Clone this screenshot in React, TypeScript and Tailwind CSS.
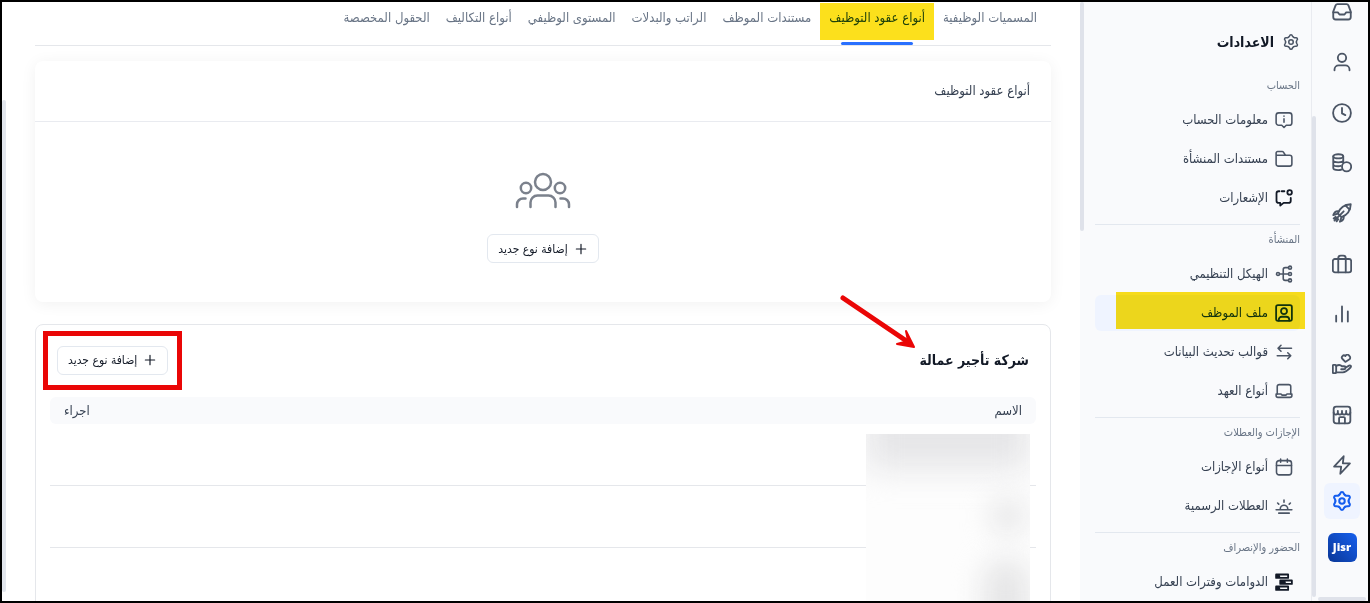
import type { ReactNode } from "react";
import clsx from "clsx";

function Icon({ children, className, stroke = 2 }: { children: ReactNode; className?: string; stroke?: number }) {
  return (
    <svg
      viewBox="0 0 24 24"
      fill="none"
      stroke="currentColor"
      strokeWidth={stroke}
      strokeLinecap="round"
      strokeLinejoin="round"
      className={clsx("shrink-0", className)}
      aria-hidden="true"
    >
      {children}
    </svg>
  );
}

const gear = (
  <>
    {[0, 60, 120, 180, 240, 300].map((a) => (
      <path
        key={a}
        transform={`rotate(${a} 12 12)`}
        d="M8.4 5.76C9 5.4 9.6 5 10 4.1C10.7 1.7 13.3 1.7 14 4.1C14.4 5 15 5.4 15.6 5.76"
      />
    ))}
    <circle cx="12" cy="12" r="3" />
  </>
);

const RAIL = [
  {
    label: "الطلبات",
    icon: (
      <>
        <path d="M1.500 12.500h5.500l2 2.500h6l2-2.500h5.500" />
        <path d="M6.500 2.500h11a2.500 2.500 0 0 1 2.200 1.500l2.800 7.500V18a3 3 0 0 1-3 3h-15a3 3 0 0 1-3-3v-6.500L4.300 4a2.500 2.500 0 0 1 2.200-1.500z" />
      </>
    ),
  },
  {
    label: "الموظفون",
    icon: (
      <>
        <circle cx="12" cy="7" r="5" />
        <path d="M3 22v-1a5 5 0 0 1 5-5h8a5 5 0 0 1 5 5v1" />
      </>
    ),
  },
  {
    label: "الحضور",
    icon: (
      <>
        <circle cx="12" cy="12" r="10.700" />
        <path d="M12 6v6.500l4 2" />
      </>
    ),
  },
  {
    label: "الرواتب",
    icon: (
      <>
        <ellipse cx="7.500" cy="4" rx="6" ry="2.500" />
        <path d="M1.500 4v14c0 1.400 2.700 2.500 6 2.500 1.500 0 2.800-.2 3.800-.6M13.500 4v7M1.500 8.700c0 1.400 2.700 2.500 6 2.500s6-1.100 6-2.500M1.500 13.400c0 1.400 2.700 2.500 6 2.500 1.100 0 2.200-.1 3-.4" />
        <circle cx="17.500" cy="16.500" r="5.500" />
      </>
    ),
  },
  {
    label: "التوظيف",
    icon: (
      <>
        <path d="M7 12.500C9.500 6 14.500 1.800 22.500 1.500c-.3 8-4.500 13-11 15.500z" />
        <path d="M16 2.800 21.200 8M8 10c-3-.7-5 .7-6.500 4.500l5.500-1.800M14 16c.7 3-.7 5-4.500 6.500l1.800-5.500M3 21l11-11M4.500 16.500 2 18.500M7.500 19.500l-2 2.500" />
      </>
    ),
  },
  {
    label: "الأعمال",
    icon: (
      <>
        <rect x="1" y="6" width="22" height="16" rx="2.500" />
        <path d="M7.500 22V5a3 3 0 0 1 3-3h3a3 3 0 0 1 3 3v17" />
      </>
    ),
  },
  { label: "التقارير", icon: <path d="M5 14v7M12 3v18M19 9v12" /> },
  {
    label: "المزايا",
    icon: (
      <>
        <path d="M16 9.500 12.600 6a2.500 2.500 0 0 1 3.500-3.600 2.600 2.600 0 0 1 4.800.1 2.500 2.500 0 0 1 .1 3.900z" />
        <rect x="1" y="13" width="4" height="10" rx="1" />
        <path d="M5 14.500c3-2 5-1.700 7 .2h2.500a1.800 1.800 0 0 1 0 3.600H11M16 16.500l4.500-2.600c1.800-.8 3 1 1.700 2.300C19 19.500 16.500 22 13 22H5" />
      </>
    ),
  },
  {
    label: "المتجر",
    icon: (
      <>
        <rect x="2" y="2" width="20" height="20" rx="3" />
        <path d="M2 9a2.500 2.500 0 0 0 5 0 2.500 2.500 0 0 0 5 0 2.500 2.500 0 0 0 5 0 2.500 2.500 0 0 0 5 0M7 7v2M12 7v2M17 7v2M8.500 22v-6a1.500 1.500 0 0 1 1.500-1.500h4a1.500 1.500 0 0 1 1.500 1.500v6" />
      </>
    ),
  },
  { label: "الأتمتة", icon: <path d="M14 1.500 2.500 14H11l-1 8.500L21.500 10H13z" /> },
];

type Item = { label: string; icon: ReactNode; active?: boolean; dark?: boolean };

const SECTIONS: { title: string; items: Item[] }[] = [
  {
    title: "الحساب",
    items: [
      {
        label: "معلومات الحساب",
        icon: (
          <>
            <path d="M5 2.500h14a3.500 3.500 0 0 1 3.500 3.500v9.500A3.500 3.500 0 0 1 19 19h-4l-3 3-3-3H5a3.500 3.500 0 0 1-3.500-3.500V6A3.500 3.500 0 0 1 5 2.500z" />
            <path d="M12 10.500v4.500M12 6.800v.1" />
          </>
        ),
      },
      {
        label: "مستندات المنشأة",
        icon: (
          <path d="M1.500 7h18a3 3 0 0 1 3 3v8.500a3 3 0 0 1-3 3h-15a3 3 0 0 1-3-3V4A2 2 0 0 1 3.500 2h6a2 2 0 0 1 1.700.9L14 7" />
        ),
      },
      {
        label: "الإشعارات",
        dark: true,
        icon: (
          <>
            <path d="M12.500 3H9M6 3H5a3 3 0 0 0-3 3v9.500a3 3 0 0 0 3 3h2V22l4.500-3.500H18a3 3 0 0 0 3-3V12" />
            <circle cx="19.500" cy="4.500" r="3" />
          </>
        ),
      },
    ],
  },
  {
    title: "المنشأة",
    items: [
      {
        label: "الهيكل التنظيمي",
        icon: (
          <>
            <circle cx="4" cy="12" r="2" />
            <circle cx="20" cy="3.500" r="2" />
            <circle cx="20" cy="12" r="2" />
            <circle cx="20" cy="20.500" r="2" />
            <path d="M6 12h12M18 3.500h-4.500a2.500 2.500 0 0 0-2.500 2.500v12a2.500 2.500 0 0 0 2.500 2.500H18" />
          </>
        ),
      },
      {
        label: "ملف الموظف",
        active: true,
        icon: (
          <>
            <rect x="1.500" y="1.500" width="21" height="21" rx="2.500" />
            <circle cx="12" cy="9.500" r="4" />
            <path d="M5 22v-1a4 4 0 0 1 4-4h6a4 4 0 0 1 4 4v1" />
          </>
        ),
      },
      { label: "قوالب تحديث البيانات", icon: <path d="M22 7H4l4-4M4 7l4 4M3 17h18l-4-4M21 17l-4 4" /> },
      {
        label: "أنواع العهد",
        icon: (
          <>
            <path d="M3 16V6a2.500 2.500 0 0 1 2.500-2.500h13A2.500 2.500 0 0 1 21 6v10" />
            <path d="M1.500 16h6.500l1.500 1.500h5L16 16h6.500v2a2.500 2.500 0 0 1-2.500 2.500H4A2.500 2.500 0 0 1 1.500 18z" />
          </>
        ),
      },
    ],
  },
  {
    title: "الإجازات والعطلات",
    items: [
      {
        label: "أنواع الإجازات",
        icon: (
          <>
            <rect x="2" y="3.500" width="20" height="19" rx="3.500" />
            <path d="M2 10h20M7.500 1.500v4M16.500 1.500v4" />
          </>
        ),
      },
      {
        label: "العطلات الرسمية",
        icon: <path d="M1.500 17h21M5 21.500h14M7 17v-1a5 5 0 0 1 10 0v1M12 7V4M5 9.500 3.500 8M19 9.500 20.500 8" />,
      },
    ],
  },
  {
    title: "الحضور والإنصراف",
    items: [
      {
        label: "الدوامات وفترات العمل",
        dark: true,
        icon: (
          <>
            <rect x="1.500" y="2" width="16" height="4.500" />
            <rect x="7" y="10" width="15.500" height="4.500" />
            <rect x="1.500" y="18" width="16" height="4.500" />
            <path d="M2.500 4.200h3M8 12.200h5M2.500 20.200h3" strokeWidth="3" />
          </>
        ),
      },
    ],
  },
];

const TABS = [
  "المسميات الوظيفية",
  "أنواع عقود التوظيف",
  "مستندات الموظف",
  "الراتب والبدلات",
  "المستوى الوظيفي",
  "أنواع التكاليف",
  "الحقول المخصصة",
];

function AddButton() {
  return (
    <button
      type="button"
      className="flex h-[29px] cursor-pointer items-center gap-1.5 rounded-md border border-[#e3e8ef] bg-white px-2.5 text-xs text-[#121926]"
    >
      <Icon className="size-3.5">
        <path d="M12 4v16M4 12h16" />
      </Icon>
      إضافة نوع جديد
    </button>
  );
}

function Rail() {
  return (
    <aside className="flex shrink-0 bg-[#f9fafc] [direction:ltr]">
      <div className="w-[5px] border-l border-[#e9ebf0] pt-[114px] pb-1">
        <div className="h-full w-1 rounded-full bg-[#dfe2ea]" />
      </div>
      <div className="flex w-[52px] flex-col items-center">
        <nav className="flex min-h-0 flex-1 flex-col items-center justify-between pb-2 text-[#4b5565]">
          {RAIL.map((r) => (
            <a key={r.label} href="#" aria-label={r.label}>
              <Icon className="size-5" stroke={2.2}>
                {r.icon}
              </Icon>
            </a>
          ))}
        </nav>
        <a
          href="#"
          aria-label="الاعدادات"
          className="flex size-9 items-center justify-center rounded-md bg-[#eff4ff] text-[#155eef]"
        >
          <Icon className="size-[22px]" stroke={2.2}>
            {gear}
          </Icon>
        </a>
        <div className="mt-3.5 flex size-[29px] items-center justify-center rounded-md bg-linear-to-bl from-[#1760ee] to-[#0a3797] font-['Open_Sans',sans-serif] text-[11px] font-extrabold text-white">
          Jisr
        </div>
        <div className="mt-[35px] h-1 w-12 rounded-full bg-[#dfe2ea]" />
      </div>
    </aside>
  );
}

function SideMenu() {
  return (
    <aside className="flex w-[231px] shrink-0 bg-[#f9fafc]">
      <div className="min-w-0 flex-1 px-[11px] pt-7">
        <h1 className="flex h-6 items-center gap-2 text-sm font-bold text-[#121926]">
          <Icon className="size-[18px] text-[#4b5565]">{gear}</Icon>
          الاعدادات
        </h1>
        <nav className="mt-4">
          {SECTIONS.map((s, i) => (
            <section key={s.title} className={clsx("pb-2", i === 0 ? "pt-2" : "border-t border-[#e3e8ef] pt-[7px]")}>
              <h2 className="text-[11px] leading-4 text-[#697586]">{s.title}</h2>
              <ul className="mt-2 flex flex-col gap-[3px]">
                {s.items.map((it) => (
                  <li key={it.label} className="relative">
                    <a
                      href="#"
                      className={clsx(
                        "flex h-9 items-center gap-[7px] rounded-md pr-[7px] text-[13px] whitespace-nowrap",
                        it.active ? "bg-[#eff4ff] text-[#123a6b]" : "text-[#364152]"
                      )}
                    >
                      <Icon
                        stroke={it.active || it.dark ? 2.4 : 2.1}
                        className={clsx("size-[18px]", !it.active && (it.dark ? "text-[#121926]" : "text-[#4b5565]"))}
                      >
                        {it.icon}
                      </Icon>
                      {it.label}
                    </a>
                    {it.active && (
                      <span className="absolute -top-[3px] -right-[5px] left-[21px] h-[37px] bg-[#fce01c] mix-blend-multiply" />
                    )}
                  </li>
                ))}
              </ul>
            </section>
          ))}
        </nav>
      </div>
      <div className="h-[229px] w-1 shrink-0 rounded-full bg-[#dfe2ea]" />
    </aside>
  );
}

export default function App() {
  return (
    <div
      dir="rtl"
      className="flex h-screen overflow-hidden border-2 border-black bg-white font-['DejaVu_Sans_Condensed','DejaVu_Sans',sans-serif]"
    >
      <Rail />
      <SideMenu />

      <main className="min-w-0 flex-1 overflow-hidden px-[29px]">
        <nav className="flex h-11 border-b border-[#e5e7eb] pr-1.5">
          {TABS.map((t, i) => (
            <a
              key={t}
              href="#"
              className={clsx(
                "relative px-2 pt-1.5 text-[13px] leading-5 whitespace-nowrap",
                i === 1 ? "mx-0.5 text-[#1f4a50]" : "text-[#697586]"
              )}
            >
              {t}
              {i === 1 && (
                <>
                  <span className="absolute -inset-x-px top-px h-[37px] bg-[#fce01c] mix-blend-multiply" />
                  <span className="absolute inset-x-5 bottom-0 h-[3px] rounded-full bg-[#2970ff]" />
                </>
              )}
            </a>
          ))}
        </nav>

        {/* contract types, empty */}
        <section className="mt-[15px] rounded-lg bg-white shadow-[0_2px_16px_rgba(0,0,0,0.06)]">
          <h2 className="flex h-[61px] items-center border-b border-[#e9ebf0] px-[21px] text-[13px] text-[#364152]">
            أنواع عقود التوظيف
          </h2>
          <div className="flex flex-col items-center pt-12 pb-[39px]">
            <svg
              viewBox="0 0 56 40"
              fill="none"
              stroke="#7b818c"
              strokeWidth="2.500"
              strokeLinecap="round"
              className="mb-6 h-10 w-14"
              aria-hidden="true"
            >
              <circle cx="28" cy="12" r="8" />
              <circle cx="11" cy="18" r="5.200" />
              <circle cx="45" cy="18" r="5.200" />
              <path d="M15.500 37v-4.500a7 7 0 0 1 7-7h11a7 7 0 0 1 7 7V37M2 37v-2.500a6 6 0 0 1 6-6h2.500M54 37v-2.500a6 6 0 0 0-6-6h-2.500" />
            </svg>
            <AddButton />
          </div>
        </section>

        {/* labour rental company */}
        <section className="relative mt-[22px] rounded-lg border border-[#e5e7eb] px-3.5">
          <div className="mb-0.5 flex h-[70px] items-center justify-between px-[7px]">
            <h2 className="text-sm font-bold text-[#121926]">شركة تأجير عمالة</h2>
            <div className="relative">
              <AddButton />
              <span className="absolute -inset-x-3.5 -inset-y-[15px] border-[5px] border-[#ea0606]" />
            </div>
          </div>
          <table className="w-full border-separate border-spacing-0 text-[13px] text-[#364152]">
            <thead>
              <tr className="h-[27px] bg-[#f9fafc]">
                <th className="rounded-r-md px-3.5 text-right font-normal">الاسم</th>
                <th className="rounded-l-md px-3.5 text-left font-normal">اجراء</th>
              </tr>
            </thead>
            <tbody>
              {[1, 2, 3].map((n) => (
                <tr key={n} className="h-[62px]">
                  <td className="border-b border-[#e5e7eb]" />
                  <td className="border-b border-[#e5e7eb]" />
                </tr>
              ))}
            </tbody>
          </table>

          <div className="absolute top-[109px] right-5 h-44 w-[164px] overflow-hidden bg-[#fdfdfd]">
            <div className="-mt-8 h-[68px] bg-[#e6e6e8] blur-[16px]" />
            <div className="mt-7 mr-1 h-9 w-9 rounded-full bg-[#e6e6e7] blur-[14px]" />
            <div className="mt-6 h-24 w-12 rounded-full bg-[#e6e6e7] blur-[14px]" />
          </div>

          <svg
            viewBox="0 0 80 60"
            fill="none"
            stroke="#ea0606"
            className="absolute -top-8 right-[130px] h-[60px] w-20"
            aria-hidden="true"
          >
            <path d="M3 5 68 49" strokeWidth="5" strokeLinecap="round" />
            <path d="M66 38 74 54 57 51 68 48z" fill="#ea0606" strokeWidth="2" strokeLinejoin="round" />
          </svg>
        </section>
      </main>

      <div className="flex w-1 shrink-0 pt-[98px] pb-[9px]">
        <div className="w-1 rounded-full bg-[#e2e6ed]" />
      </div>
    </div>
  );
}
